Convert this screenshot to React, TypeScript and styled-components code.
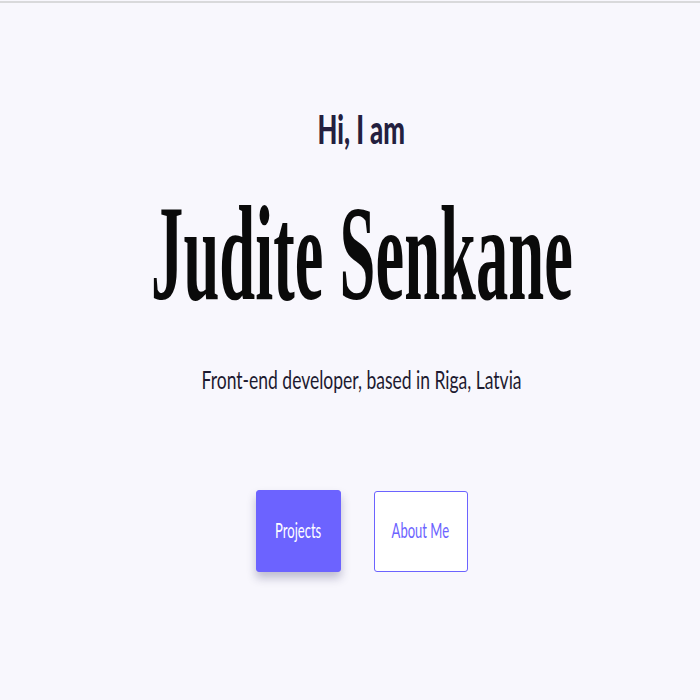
import React from "react";
import styled, { createGlobalStyle } from "styled-components";

const Global = createGlobalStyle`
  html, body { margin: 0; padding: 0; background: #f8f7fd; overflow-x: hidden; }
  body { font-family: "Lato", "Liberation Sans", sans-serif; }
`;

const Page = styled.main`
  min-height: 697px;
  box-sizing: border-box;
  border-top: 2px solid #d9d9db;
  margin-top: 1px;
  display: flex;
  flex-direction: column;
  align-items: center;
  padding: 107px 0 0 23px;
  overflow: hidden;
`;

const Squeeze = styled.span<{ $sx: number }>`
  display: inline-block;
  transform: scaleX(${(p) => p.$sx});
  transform-origin: center;
  white-space: nowrap;
`;

const Greeting = styled.h2`
  margin: 0;
  font-family: "Lato", sans-serif;
  font-weight: 900;
  font-size: 39px;
  line-height: 1;
  color: #241f3f;
`;

const Name = styled.h1`
  margin: 36px 0 0;
  font-family: "Liberation Serif", serif;
  font-weight: 700;
  font-size: 136px;
  line-height: 1;
  color: #0a0a0a;
  max-width: 100%;
  display: flex;
  justify-content: center;
`;

const Tagline = styled.p`
  margin: 46px 0 0;
  font-family: "Lato", sans-serif;
  font-weight: 400;
  font-size: 25px;
  line-height: 1;
  color: #1d1a30;
`;

const Actions = styled.div`
  margin-top: 98px;
  display: flex;
  align-items: center;
  gap: 33px;
`;

const Button = styled.button<{ $primary?: boolean }>`
  box-sizing: border-box;
  width: ${(p) => (p.$primary ? 85 : 94)}px;
  height: ${(p) => (p.$primary ? 82 : 81)}px;
  border-radius: 3px;
  border: 1px solid #6c63ff;
  background: ${(p) => (p.$primary ? "#6c63ff" : "#ffffff")};
  color: ${(p) => (p.$primary ? "#ffffff" : "#6c63ff")};
  box-shadow: ${(p) => (p.$primary ? "0 6px 10px rgba(40, 35, 90, 0.28)" : "none")};
  font-family: "Lato", sans-serif;
  font-size: 21px;
  line-height: 1;
  display: flex;
  align-items: center;
  justify-content: center;
  padding: 0 0 3px;
  cursor: pointer;
`;

export default function App() {
  return (
    <>
      <Global />
      <Page>
        <Greeting>
          <Squeeze $sx={0.66}>Hi, I am</Squeeze>
        </Greeting>
        <Name>
          <Squeeze $sx={0.475}>Judite Senkane</Squeeze>
        </Name>
        <Tagline>
          <Squeeze $sx={0.7}>Front-end developer, based in Riga, Latvia</Squeeze>
        </Tagline>
        <Actions>
          <Button $primary>
            <Squeeze $sx={0.62}>Projects</Squeeze>
          </Button>
          <Button>
            <Squeeze $sx={0.62}>About Me</Squeeze>
          </Button>
        </Actions>
      </Page>
    </>
  );
}
